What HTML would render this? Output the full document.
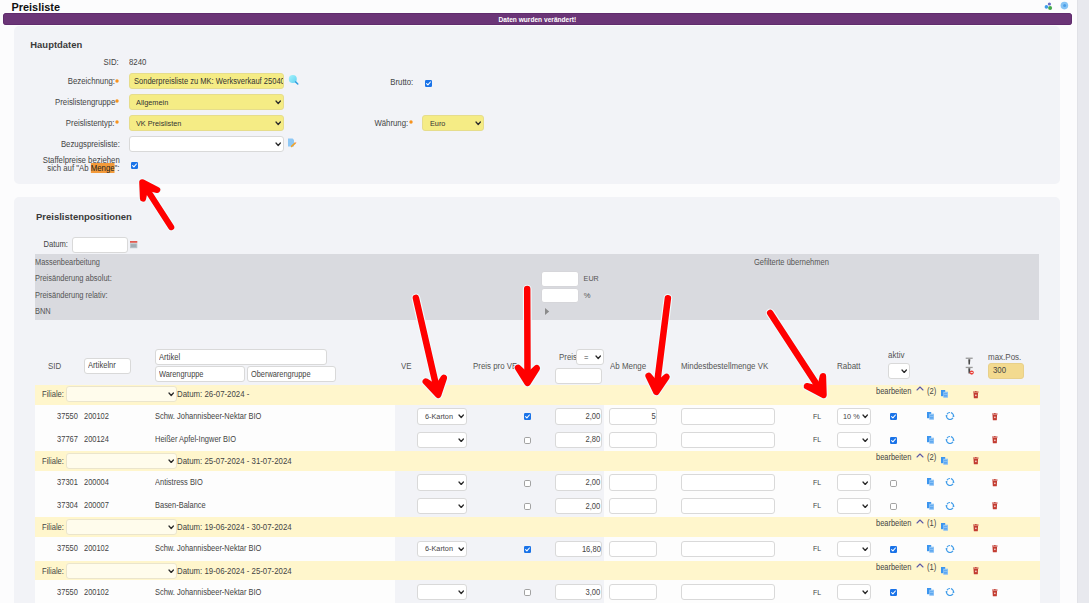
<!DOCTYPE html>
<html><head><meta charset="utf-8"><style>
html,body{margin:0;padding:0;}
body{width:1089px;height:603px;overflow:hidden;position:relative;background:#fcfcfd;font-family:"Liberation Sans", sans-serif;}
</style></head><body>
<div style="position:absolute;left:1076.50px;top:0.00px;width:12.50px;height:603.00px;background:#e8e9ee;border-left:1px solid #e1e2e7;box-sizing:border-box;"></div>
<div style="position:absolute;left:11.50px;top:1.08px;font-size:10.90px;line-height:13.08px;color:#111;font-weight:bold;white-space:nowrap;">Preisliste</div>
<svg style="position:absolute;left:1042px;top:0px" width="12" height="12"><circle cx="7.4" cy="4" r="1.6" fill="#6a6fc8"/><circle cx="4.4" cy="6.9" r="1.8" fill="#3d9be9"/><circle cx="8.1" cy="8.1" r="2" fill="#44a84a"/></svg>
<svg style="position:absolute;left:1059px;top:0px" width="12" height="12"><circle cx="5.4" cy="5.6" r="3.8" fill="#86c4f5"/><circle cx="5.6" cy="5.6" r="1.5" fill="#4d9fe8"/></svg>
<div style="position:absolute;left:3.00px;top:13.20px;width:1068.80px;height:11.40px;background:#6b3577;border-radius:3.5px;box-shadow:inset 0 0 0 0.8px #5e2a6b;"></div>
<div style="position:absolute;left:537.40px;top:16.15px;font-size:6.60px;line-height:7.92px;color:#fff;font-weight:bold;white-space:nowrap;transform:translateX(-50%) scaleX(1.0000);transform-origin:0 0;">Daten wurden verändert!</div>
<div style="position:absolute;left:14.00px;top:26.00px;width:1046.00px;height:158.40px;background:#f2f3f7;border-radius:5px;"></div>
<div style="position:absolute;left:30.30px;top:39.46px;font-size:9.45px;line-height:11.34px;color:#3a3a3a;font-weight:bold;white-space:nowrap;">Hauptdaten</div>
<div style="position:absolute;right:970.00px;top:57.28px;font-size:8.58px;line-height:10.30px;color:#444;font-weight:normal;white-space:nowrap;transform:scaleX(0.9091);transform-origin:100% 0;">SID:</div>
<div style="position:absolute;left:129.00px;top:57.28px;font-size:8.58px;line-height:10.30px;color:#444;font-weight:normal;white-space:nowrap;transform:scaleX(0.9091);transform-origin:0 0;">8240</div>
<svg style="position:absolute;left:115.30px;top:78.70px" width="4" height="4"><circle cx="2" cy="2" r="1.7" fill="#f7931e"/></svg>
<div style="position:absolute;right:974.30px;top:76.28px;font-size:8.58px;line-height:10.30px;color:#444;font-weight:normal;white-space:nowrap;transform:scaleX(0.9091);transform-origin:100% 0;">Bezeichnung:</div>
<div style="position:absolute;left:128.70px;top:73.40px;width:155.70px;height:16.00px;background:#f5ec85;border:1px solid #e6dd8c;border-radius:3px;box-sizing:border-box;"></div>
<div style="position:absolute;left:129.70px;top:73.40px;width:153.70px;height:16.00px;overflow:hidden">
<div style="position:absolute;left:4.30px;top:3.54px;font-size:8.30px;line-height:9.97px;color:#333;font-weight:normal;white-space:nowrap;transform:scaleX(0.9091);transform-origin:0 0;">Sonderpreisliste zu MK: Werksverkauf 25040</div>
</div>
<svg style="position:absolute;left:115.30px;top:99.40px" width="4" height="4"><circle cx="2" cy="2" r="1.7" fill="#f7931e"/></svg>
<div style="position:absolute;right:974.00px;top:97.28px;font-size:8.58px;line-height:10.30px;color:#444;font-weight:normal;white-space:nowrap;transform:scaleX(0.9091);transform-origin:100% 0;">Preislistengruppe</div>
<div style="position:absolute;left:128.70px;top:94.10px;width:155.70px;height:15.90px;background:#f5ec85;border:1px solid #e6dd8c;border-radius:3px;box-sizing:border-box;"></div>
<svg style="position:absolute;left:275.20px;top:100.00px" width="6.40" height="4.50"><polyline points="1,1 3.20,3.50 5.40,1" fill="none" stroke="#2a2a2a" stroke-width="1.25" stroke-linecap="round" stroke-linejoin="round"/></svg>
<div style="position:absolute;left:135.80px;top:97.75px;font-size:8.09px;line-height:9.70px;color:#333;font-weight:normal;white-space:nowrap;transform:scaleX(0.9091);transform-origin:0 0;">Allgemein</div>
<svg style="position:absolute;left:115.30px;top:120.20px" width="4" height="4"><circle cx="2" cy="2" r="1.7" fill="#f7931e"/></svg>
<div style="position:absolute;right:974.30px;top:118.28px;font-size:8.58px;line-height:10.30px;color:#444;font-weight:normal;white-space:nowrap;transform:scaleX(0.9091);transform-origin:100% 0;">Preislistentyp:</div>
<div style="position:absolute;left:128.70px;top:115.30px;width:155.70px;height:15.70px;background:#f5ec85;border:1px solid #e6dd8c;border-radius:3px;box-sizing:border-box;"></div>
<svg style="position:absolute;left:275.20px;top:121.10px" width="6.40" height="4.50"><polyline points="1,1 3.20,3.50 5.40,1" fill="none" stroke="#2a2a2a" stroke-width="1.25" stroke-linecap="round" stroke-linejoin="round"/></svg>
<div style="position:absolute;left:135.80px;top:118.80px;font-size:8.03px;line-height:9.64px;color:#333;font-weight:normal;white-space:nowrap;transform:scaleX(0.9091);transform-origin:0 0;">VK Preislisten</div>
<svg style="position:absolute;left:286px;top:72px" width="14" height="14"><defs><linearGradient id="sg" x1="0" y1="0" x2="1" y2="1"><stop offset="0" stop-color="#a6f3fb"/><stop offset="1" stop-color="#62d2f2"/></linearGradient></defs><circle cx="6.8" cy="7" r="4" fill="url(#sg)"/><line x1="9.6" y1="9.9" x2="11.8" y2="12" stroke="#2f9ee0" stroke-width="1.5" stroke-linecap="round"/></svg>
<svg style="position:absolute;left:286px;top:136px" width="12" height="13"><path d="M2 2.6 L6.6 2.6 L8 4 L8 10.6 L2 10.6 Z" fill="#8ec8f5"/><line x1="5.6" y1="10.4" x2="9.4" y2="6.9" stroke="#f0a22a" stroke-width="1.6" stroke-linecap="round"/><circle cx="9.6" cy="6.6" r="0.7" fill="#f3b1b0"/></svg>
<div style="position:absolute;right:969.60px;top:139.28px;font-size:8.58px;line-height:10.30px;color:#444;font-weight:normal;white-space:nowrap;transform:scaleX(0.9091);transform-origin:100% 0;">Bezugspreisliste:</div>
<div style="position:absolute;left:128.70px;top:136.00px;width:155.70px;height:16.30px;background:#fff;border:1px solid #d9d9d9;border-radius:3px;box-sizing:border-box;"></div>
<svg style="position:absolute;left:275.20px;top:142.10px" width="6.40" height="4.50"><polyline points="1,1 3.20,3.50 5.40,1" fill="none" stroke="#2a2a2a" stroke-width="1.25" stroke-linecap="round" stroke-linejoin="round"/></svg>
<div style="position:absolute;right:969.20px;top:155.28px;font-size:8.58px;line-height:10.30px;color:#444;font-weight:normal;white-space:nowrap;transform:scaleX(0.9091);transform-origin:100% 0;">Staffelpreise beziehen</div>
<div style="position:absolute;right:969.40px;top:163.28px;font-size:8.58px;line-height:10.30px;color:#444;font-weight:normal;white-space:nowrap;transform:scaleX(0.9091);transform-origin:100% 0;">sich auf "Ab <span style="background:#f39a3a;color:#222">Menge</span>":</div>
<svg style="position:absolute;left:130.80px;top:162.00px" width="7" height="7"><rect x="0" y="0" width="7" height="7" rx="1.2" fill="#1a73e8"/><polyline points="1.6,3.6 2.9,4.9 5.4,2" fill="none" stroke="#fff" stroke-width="1.1" stroke-linecap="round" stroke-linejoin="round"/></svg>
<div style="position:absolute;right:675.90px;top:77.28px;font-size:8.58px;line-height:10.30px;color:#444;font-weight:normal;white-space:nowrap;transform:scaleX(0.9091);transform-origin:100% 0;">Brutto:</div>
<svg style="position:absolute;left:424.70px;top:79.60px" width="7" height="7"><rect x="0" y="0" width="7" height="7" rx="1.2" fill="#1a73e8"/><polyline points="1.6,3.6 2.9,4.9 5.4,2" fill="none" stroke="#fff" stroke-width="1.1" stroke-linecap="round" stroke-linejoin="round"/></svg>
<svg style="position:absolute;left:409.20px;top:120.10px" width="4" height="4"><circle cx="2" cy="2" r="1.7" fill="#f7931e"/></svg>
<div style="position:absolute;right:680.60px;top:118.28px;font-size:8.58px;line-height:10.30px;color:#444;font-weight:normal;white-space:nowrap;transform:scaleX(0.9091);transform-origin:100% 0;">Währung:</div>
<div style="position:absolute;left:422.40px;top:115.10px;width:62.00px;height:15.90px;background:#f5ec85;border:1px solid #e6dd8c;border-radius:3px;box-sizing:border-box;"></div>
<svg style="position:absolute;left:475.20px;top:121.00px" width="6.40" height="4.50"><polyline points="1,1 3.20,3.50 5.40,1" fill="none" stroke="#2a2a2a" stroke-width="1.25" stroke-linecap="round" stroke-linejoin="round"/></svg>
<div style="position:absolute;left:429.70px;top:118.80px;font-size:8.03px;line-height:9.64px;color:#333;font-weight:normal;white-space:nowrap;transform:scaleX(0.9091);transform-origin:0 0;">Euro</div>
<div style="position:absolute;left:14.00px;top:197.40px;width:1046.00px;height:502.60px;background:#f2f3f7;border-radius:5px;"></div>
<div style="position:absolute;left:36.00px;top:211.42px;font-size:9.49px;line-height:11.39px;color:#3a3a3a;font-weight:bold;white-space:nowrap;">Preislistenpositionen</div>
<div style="position:absolute;right:1021.00px;top:239.49px;font-size:8.36px;line-height:10.03px;color:#444;font-weight:normal;white-space:nowrap;transform:scaleX(0.9091);transform-origin:100% 0;">Datum:</div>
<div style="position:absolute;left:71.70px;top:236.60px;width:56.20px;height:16.50px;background:#fff;border:1px solid #d9d9d9;border-radius:3px;box-sizing:border-box;"></div>
<svg style="position:absolute;left:130px;top:240.5px" width="8" height="8"><rect x="0" y="0" width="7.3" height="1.8" fill="#e05a4f"/><rect x="0" y="2.2" width="7.3" height="5" fill="#b9c2c8"/><rect x="1" y="3.2" width="5.3" height="3" fill="#a2adb4"/></svg>
<div style="position:absolute;left:35.00px;top:254.00px;width:1004.00px;height:65.80px;background:#d9dadf;"></div>
<div style="position:absolute;left:35.30px;top:257.70px;font-size:8.14px;line-height:9.77px;color:#555;font-weight:normal;white-space:nowrap;transform:scaleX(0.9091);transform-origin:0 0;">Massenbearbeitung</div>
<div style="position:absolute;left:35.30px;top:273.63px;font-size:8.21px;line-height:9.85px;color:#555;font-weight:normal;white-space:nowrap;transform:scaleX(0.9091);transform-origin:0 0;">Preisänderung absolut:</div>
<div style="position:absolute;left:35.30px;top:290.63px;font-size:8.21px;line-height:9.85px;color:#555;font-weight:normal;white-space:nowrap;transform:scaleX(0.9091);transform-origin:0 0;">Preisänderung relativ:</div>
<div style="position:absolute;left:35.30px;top:306.63px;font-size:8.21px;line-height:9.85px;color:#555;font-weight:normal;white-space:nowrap;transform:scaleX(0.9091);transform-origin:0 0;">BNN</div>
<div style="position:absolute;left:753.90px;top:257.55px;font-size:8.29px;line-height:9.95px;color:#555;font-weight:normal;white-space:nowrap;transform:scaleX(0.9091);transform-origin:0 0;">Gefilterte übernehmen</div>
<div style="position:absolute;left:541.20px;top:270.60px;width:38.20px;height:16.00px;background:#fff;border:1px solid #d6d6da;border-radius:3px;box-sizing:border-box;"></div>
<div style="position:absolute;left:541.20px;top:287.80px;width:38.20px;height:15.40px;background:#fff;border:1px solid #d6d6da;border-radius:3px;box-sizing:border-box;"></div>
<div style="position:absolute;left:583.60px;top:274.59px;font-size:7.20px;line-height:8.64px;color:#555;font-weight:normal;white-space:nowrap;">EUR</div>
<div style="position:absolute;left:583.80px;top:291.21px;font-size:7.60px;line-height:9.12px;color:#555;font-weight:normal;white-space:nowrap;">%</div>
<svg style="position:absolute;left:544.8px;top:308px" width="6" height="8"><polygon points="0,0 4.2,3.5 0,7" fill="#8a8a8a"/></svg>
<div style="position:absolute;left:47.50px;top:361.17px;font-size:8.69px;line-height:10.43px;color:#555;font-weight:normal;white-space:nowrap;transform:scaleX(0.9091);transform-origin:0 0;">SID</div>
<div style="position:absolute;left:84.20px;top:357.50px;width:47.30px;height:16.10px;background:#fff;border:1px solid #d9d9d9;border-radius:3px;box-sizing:border-box;"></div>
<div style="position:absolute;left:88.20px;top:360.49px;font-size:8.36px;line-height:10.03px;color:#444;font-weight:normal;white-space:nowrap;transform:scaleX(0.9091);transform-origin:0 0;">Artikelnr</div>
<div style="position:absolute;left:154.70px;top:349.20px;width:171.90px;height:16.20px;background:#fff;border:1px solid #d9d9d9;border-radius:3px;box-sizing:border-box;"></div>
<div style="position:absolute;left:158.70px;top:352.49px;font-size:8.36px;line-height:10.03px;color:#444;font-weight:normal;white-space:nowrap;transform:scaleX(0.9091);transform-origin:0 0;">Artikel</div>
<div style="position:absolute;left:154.70px;top:366.40px;width:89.90px;height:15.80px;background:#fff;border:1px solid #d9d9d9;border-radius:3px;box-sizing:border-box;"></div>
<div style="position:absolute;left:158.70px;top:369.70px;font-size:8.14px;line-height:9.77px;color:#444;font-weight:normal;white-space:nowrap;transform:scaleX(0.9091);transform-origin:0 0;">Warengruppe</div>
<div style="position:absolute;left:247.30px;top:366.40px;width:89.20px;height:15.80px;background:#fff;border:1px solid #d9d9d9;border-radius:3px;box-sizing:border-box;"></div>
<div style="position:absolute;left:251.30px;top:369.70px;font-size:8.14px;line-height:9.77px;color:#444;font-weight:normal;white-space:nowrap;transform:scaleX(0.9091);transform-origin:0 0;">Oberwarengruppe</div>
<div style="position:absolute;left:401.00px;top:361.17px;font-size:8.69px;line-height:10.43px;color:#555;font-weight:normal;white-space:nowrap;transform:scaleX(0.9091);transform-origin:0 0;">VE</div>
<div style="position:absolute;left:472.60px;top:361.17px;font-size:8.69px;line-height:10.43px;color:#555;font-weight:normal;white-space:nowrap;transform:scaleX(0.9091);transform-origin:0 0;">Preis pro VE</div>
<div style="position:absolute;left:558.50px;top:352.17px;font-size:8.69px;line-height:10.43px;color:#555;font-weight:normal;white-space:nowrap;transform:scaleX(0.9091);transform-origin:0 0;">Preis</div>
<div style="position:absolute;left:576.40px;top:349.40px;width:27.30px;height:16.10px;background:#fff;border:1px solid #d9d9d9;border-radius:3px;box-sizing:border-box;"></div>
<svg style="position:absolute;left:594.50px;top:355.40px" width="6.40" height="4.50"><polyline points="1,1 3.20,3.50 5.40,1" fill="none" stroke="#2a2a2a" stroke-width="1.25" stroke-linecap="round" stroke-linejoin="round"/></svg>
<div style="position:absolute;left:584.00px;top:352.49px;font-size:8.36px;line-height:10.03px;color:#444;font-weight:normal;white-space:nowrap;transform:scaleX(0.9091);transform-origin:0 0;">=</div>
<div style="position:absolute;left:554.50px;top:367.50px;width:47.80px;height:16.30px;background:#fff;border:1px solid #d9d9d9;border-radius:3px;box-sizing:border-box;"></div>
<div style="position:absolute;left:609.70px;top:361.13px;font-size:8.73px;line-height:10.48px;color:#555;font-weight:normal;white-space:nowrap;transform:scaleX(0.9091);transform-origin:0 0;">Ab Menge</div>
<div style="position:absolute;left:680.90px;top:361.17px;font-size:8.69px;line-height:10.43px;color:#555;font-weight:normal;white-space:nowrap;transform:scaleX(0.9091);transform-origin:0 0;">Mindestbestellmenge VK</div>
<div style="position:absolute;left:837.30px;top:361.07px;font-size:8.80px;line-height:10.56px;color:#555;font-weight:normal;white-space:nowrap;transform:scaleX(0.9091);transform-origin:0 0;">Rabatt</div>
<div style="position:absolute;left:888.00px;top:350.07px;font-size:8.80px;line-height:10.56px;color:#555;font-weight:normal;white-space:nowrap;transform:scaleX(0.9091);transform-origin:0 0;">aktiv</div>
<div style="position:absolute;left:887.60px;top:362.60px;width:22.20px;height:16.00px;background:#fff;border:1px solid #d9d9d9;border-radius:3px;box-sizing:border-box;"></div>
<svg style="position:absolute;left:900.60px;top:368.55px" width="6.40" height="4.50"><polyline points="1,1 3.20,3.50 5.40,1" fill="none" stroke="#2a2a2a" stroke-width="1.25" stroke-linecap="round" stroke-linejoin="round"/></svg>
<svg style="position:absolute;left:964px;top:356px" width="12" height="20"><rect x="1.7" y="1.6" width="7" height="1.3" fill="#9a9a9a"/><path d="M4.3 3.2 L6.3 3.2 L5.9 8.5 L4.5 8.5 Z" fill="#4a4a4a"/><rect x="1.7" y="10.8" width="7" height="1.3" fill="#9a9a9a"/><path d="M4.3 12.3 L6.3 12.3 L5.9 17.6 L4.5 17.6 Z" fill="#4a4a4a"/><circle cx="7.7" cy="16.6" r="2.1" fill="#e8413b"/><rect x="6.6" y="16.2" width="2.2" height="0.8" fill="#fff"/></svg>
<div style="position:absolute;left:988.30px;top:352.07px;font-size:8.80px;line-height:10.56px;color:#555;font-weight:normal;white-space:nowrap;transform:scaleX(0.9091);transform-origin:0 0;">max.Pos.</div>
<div style="position:absolute;left:988.30px;top:362.80px;width:35.50px;height:15.80px;background:#f3da8f;border:1px solid #e8d08a;border-radius:3px;box-sizing:border-box;"></div>
<div style="position:absolute;left:993.30px;top:365.28px;font-size:8.58px;line-height:10.30px;color:#444;font-weight:normal;white-space:nowrap;transform:scaleX(0.9091);transform-origin:0 0;">300</div>
<div style="position:absolute;left:35.00px;top:384.50px;width:1004.60px;height:20.00px;background:#fff6cc;"></div>
<div style="position:absolute;left:41.70px;top:389.49px;font-size:8.36px;line-height:10.03px;color:#444;font-weight:normal;white-space:nowrap;transform:scaleX(0.9091);transform-origin:0 0;">Filiale:</div>
<div style="position:absolute;left:66.20px;top:386.40px;width:110.50px;height:16.00px;background:#fffcec;border:1px solid #ebe5cc;border-radius:3px;box-sizing:border-box;"></div>
<svg style="position:absolute;left:167.50px;top:392.35px" width="6.40" height="4.50"><polyline points="1,1 3.20,3.50 5.40,1" fill="none" stroke="#2a2a2a" stroke-width="1.25" stroke-linecap="round" stroke-linejoin="round"/></svg>
<div style="position:absolute;left:177.20px;top:389.23px;font-size:8.63px;line-height:10.36px;color:#444;font-weight:normal;white-space:nowrap;transform:scaleX(0.9091);transform-origin:0 0;">Datum: 26-07-2024 -</div>
<div style="position:absolute;left:875.50px;top:386.62px;font-size:8.22px;line-height:9.86px;color:#444;font-weight:normal;white-space:nowrap;transform:scaleX(0.9091);transform-origin:0 0;">bearbeiten</div>
<svg style="position:absolute;left:915.70px;top:386.40px" width="8.00" height="5.00"><polyline points="1,4.00 4.00,1 7.00,4.00" fill="none" stroke="#5a58a8" stroke-width="1.1" stroke-linecap="round" stroke-linejoin="round"/></svg>
<div style="position:absolute;left:927.30px;top:386.49px;font-size:8.36px;line-height:10.03px;color:#444;font-weight:normal;white-space:nowrap;transform:scaleX(0.9091);transform-origin:0 0;">(2)</div>
<svg style="position:absolute;left:940.80px;top:390.30px" width="8" height="8"><rect x="0" y="0" width="4.2" height="6.2" fill="#3b95ef"/><rect x="2.2" y="1.7" width="4.8" height="6" fill="#8fc4f5"/><rect x="3" y="3.4" width="3.2" height="0.7" fill="#4a9cef"/><rect x="3" y="5" width="3.2" height="0.7" fill="#4a9cef"/><rect x="3" y="6.5" width="3.2" height="0.6" fill="#4a9cef"/></svg>
<svg style="position:absolute;left:972.50px;top:390.70px" width="6" height="8"><rect x="0" y="0.4" width="5.6" height="1.1" rx="0.3" fill="#c23b30"/><rect x="2" y="0" width="1.6" height="0.8" fill="#c23b30"/><path d="M0.5 1.8 L5.1 1.8 L4.8 7 Q4.75 7.2 4.5 7.2 L1.1 7.2 Q0.85 7.2 0.8 7 Z" fill="#c23b30"/><rect x="2.1" y="3.6" width="1.5" height="1.5" fill="#f6d3cf"/></svg>
<div style="position:absolute;left:35.00px;top:404.50px;width:360.20px;height:23.50px;background:#fdfdfd;"></div>
<div style="position:absolute;left:395.20px;top:404.50px;width:208.90px;height:23.50px;background:#f2f3f7;"></div>
<div style="position:absolute;left:604.10px;top:404.50px;width:435.50px;height:23.50px;background:#fdfdfd;"></div>
<div style="position:absolute;right:1010.70px;top:411.61px;font-size:8.23px;line-height:9.87px;color:#444;font-weight:normal;white-space:nowrap;transform:scaleX(0.9091);transform-origin:100% 0;">37550</div>
<div style="position:absolute;left:84.30px;top:411.61px;font-size:8.23px;line-height:9.87px;color:#444;font-weight:normal;white-space:nowrap;transform:scaleX(0.9091);transform-origin:0 0;">200102</div>
<div style="position:absolute;left:154.70px;top:411.61px;font-size:8.23px;line-height:9.87px;color:#444;font-weight:normal;white-space:nowrap;transform:scaleX(0.9091);transform-origin:0 0;">Schw. Johannisbeer-Nektar BIO</div>
<div style="position:absolute;left:417.40px;top:408.00px;width:49.80px;height:16.50px;background:#fff;border:1px solid #d9d9d9;border-radius:3px;box-sizing:border-box;"></div>
<svg style="position:absolute;left:458.00px;top:414.20px" width="6.40" height="4.50"><polyline points="1,1 3.20,3.50 5.40,1" fill="none" stroke="#2a2a2a" stroke-width="1.25" stroke-linecap="round" stroke-linejoin="round"/></svg>
<div style="position:absolute;left:424.60px;top:411.80px;font-size:8.03px;line-height:9.64px;color:#444;font-weight:normal;white-space:nowrap;transform:scaleX(0.9091);transform-origin:0 0;">6-Karton</div>
<svg style="position:absolute;left:524.40px;top:413.30px" width="7" height="7"><rect x="0" y="0" width="7" height="7" rx="1.2" fill="#1a73e8"/><polyline points="1.6,3.6 2.9,4.9 5.4,2" fill="none" stroke="#fff" stroke-width="1.1" stroke-linecap="round" stroke-linejoin="round"/></svg>
<div style="position:absolute;left:554.50px;top:408.00px;width:47.80px;height:16.60px;background:#fff;border:1px solid #d9d9d9;border-radius:3px;box-sizing:border-box;"></div>
<div style="position:absolute;right:488.50px;top:411.49px;font-size:8.36px;line-height:10.03px;color:#444;font-weight:normal;white-space:nowrap;transform:scaleX(0.9091);transform-origin:100% 0;">2,00</div>
<div style="position:absolute;left:609.30px;top:408.00px;width:48.10px;height:16.60px;background:#fff;border:1px solid #d9d9d9;border-radius:3px;box-sizing:border-box;"></div>
<div style="position:absolute;right:433.40px;top:411.49px;font-size:8.36px;line-height:10.03px;color:#444;font-weight:normal;white-space:nowrap;transform:scaleX(0.9091);transform-origin:100% 0;">5</div>
<div style="position:absolute;left:681.30px;top:408.00px;width:93.60px;height:16.60px;background:#fff;border:1px solid #d9d9d9;border-radius:3px;box-sizing:border-box;"></div>
<div style="position:absolute;left:813.20px;top:412.11px;font-size:7.70px;line-height:9.24px;color:#444;font-weight:normal;white-space:nowrap;transform:scaleX(0.9091);transform-origin:0 0;">FL</div>
<div style="position:absolute;left:837.30px;top:408.00px;width:33.40px;height:16.50px;background:#fff;border:1px solid #d9d9d9;border-radius:3px;box-sizing:border-box;"></div>
<svg style="position:absolute;left:861.50px;top:414.20px" width="6.40" height="4.50"><polyline points="1,1 3.20,3.50 5.40,1" fill="none" stroke="#2a2a2a" stroke-width="1.25" stroke-linecap="round" stroke-linejoin="round"/></svg>
<div style="position:absolute;left:843.00px;top:411.80px;font-size:8.03px;line-height:9.64px;color:#444;font-weight:normal;white-space:nowrap;transform:scaleX(0.9091);transform-origin:0 0;">10 %</div>
<svg style="position:absolute;left:890.00px;top:413.30px" width="7" height="7"><rect x="0" y="0" width="7" height="7" rx="1.2" fill="#1a73e8"/><polyline points="1.6,3.6 2.9,4.9 5.4,2" fill="none" stroke="#fff" stroke-width="1.1" stroke-linecap="round" stroke-linejoin="round"/></svg>
<svg style="position:absolute;left:927.00px;top:412.00px" width="8" height="8"><rect x="0" y="0" width="4.2" height="6.2" fill="#3b95ef"/><rect x="2.2" y="1.7" width="4.8" height="6" fill="#8fc4f5"/><rect x="3" y="3.4" width="3.2" height="0.7" fill="#4a9cef"/><rect x="3" y="5" width="3.2" height="0.7" fill="#4a9cef"/><rect x="3" y="6.5" width="3.2" height="0.6" fill="#4a9cef"/></svg>
<svg style="position:absolute;left:944.80px;top:411.00px" width="10" height="10"><path d="M5.91 1.60 A3.5 3.5 0 0 1 8.39 5.91 M8.04 6.75 A3.5 3.5 0 0 1 3.25 8.04 M4.09 8.39 A3.5 3.5 0 0 1 1.60 4.09 M1.96 3.25 A3.5 3.5 0 0 1 5.00 1.50" fill="none" stroke="#3d9be9" stroke-width="1.15"/><polygon points="8.50,3.40 9.70,5.40 7.30,5.40" fill="#3d9be9"/><polygon points="1.50,6.60 2.70,4.60 0.30,4.60" fill="#3d9be9"/></svg>
<svg style="position:absolute;left:991.90px;top:412.70px" width="6" height="8"><rect x="0" y="0.4" width="5.6" height="1.1" rx="0.3" fill="#c23b30"/><rect x="2" y="0" width="1.6" height="0.8" fill="#c23b30"/><path d="M0.5 1.8 L5.1 1.8 L4.8 7 Q4.75 7.2 4.5 7.2 L1.1 7.2 Q0.85 7.2 0.8 7 Z" fill="#c23b30"/><rect x="2.1" y="3.6" width="1.5" height="1.5" fill="#f6d3cf"/></svg>
<div style="position:absolute;left:35.00px;top:428.00px;width:360.20px;height:23.00px;background:#fdfdfd;"></div>
<div style="position:absolute;left:395.20px;top:428.00px;width:208.90px;height:23.00px;background:#f2f3f7;"></div>
<div style="position:absolute;left:604.10px;top:428.00px;width:435.50px;height:23.00px;background:#fdfdfd;"></div>
<div style="position:absolute;right:1010.70px;top:434.61px;font-size:8.23px;line-height:9.87px;color:#444;font-weight:normal;white-space:nowrap;transform:scaleX(0.9091);transform-origin:100% 0;">37767</div>
<div style="position:absolute;left:84.30px;top:434.61px;font-size:8.23px;line-height:9.87px;color:#444;font-weight:normal;white-space:nowrap;transform:scaleX(0.9091);transform-origin:0 0;">200124</div>
<div style="position:absolute;left:154.70px;top:434.61px;font-size:8.23px;line-height:9.87px;color:#444;font-weight:normal;white-space:nowrap;transform:scaleX(0.9091);transform-origin:0 0;">Heißer Apfel-Ingwer BIO</div>
<div style="position:absolute;left:417.40px;top:431.50px;width:49.80px;height:16.50px;background:#fff;border:1px solid #d9d9d9;border-radius:3px;box-sizing:border-box;"></div>
<svg style="position:absolute;left:458.00px;top:437.70px" width="6.40" height="4.50"><polyline points="1,1 3.20,3.50 5.40,1" fill="none" stroke="#2a2a2a" stroke-width="1.25" stroke-linecap="round" stroke-linejoin="round"/></svg>
<svg style="position:absolute;left:524.40px;top:436.80px" width="7" height="7"><rect x="0.5" y="0.5" width="6" height="6" rx="1.2" fill="#fff" stroke="#8c8c8c" stroke-width="0.8"/></svg>
<div style="position:absolute;left:554.50px;top:431.50px;width:47.80px;height:16.60px;background:#fff;border:1px solid #d9d9d9;border-radius:3px;box-sizing:border-box;"></div>
<div style="position:absolute;right:488.50px;top:434.49px;font-size:8.36px;line-height:10.03px;color:#444;font-weight:normal;white-space:nowrap;transform:scaleX(0.9091);transform-origin:100% 0;">2,80</div>
<div style="position:absolute;left:609.30px;top:431.50px;width:48.10px;height:16.60px;background:#fff;border:1px solid #d9d9d9;border-radius:3px;box-sizing:border-box;"></div>
<div style="position:absolute;left:681.30px;top:431.50px;width:93.60px;height:16.60px;background:#fff;border:1px solid #d9d9d9;border-radius:3px;box-sizing:border-box;"></div>
<div style="position:absolute;left:813.20px;top:435.11px;font-size:7.70px;line-height:9.24px;color:#444;font-weight:normal;white-space:nowrap;transform:scaleX(0.9091);transform-origin:0 0;">FL</div>
<div style="position:absolute;left:837.30px;top:431.50px;width:33.40px;height:16.50px;background:#fff;border:1px solid #d9d9d9;border-radius:3px;box-sizing:border-box;"></div>
<svg style="position:absolute;left:861.50px;top:437.70px" width="6.40" height="4.50"><polyline points="1,1 3.20,3.50 5.40,1" fill="none" stroke="#2a2a2a" stroke-width="1.25" stroke-linecap="round" stroke-linejoin="round"/></svg>
<svg style="position:absolute;left:890.00px;top:436.80px" width="7" height="7"><rect x="0" y="0" width="7" height="7" rx="1.2" fill="#1a73e8"/><polyline points="1.6,3.6 2.9,4.9 5.4,2" fill="none" stroke="#fff" stroke-width="1.1" stroke-linecap="round" stroke-linejoin="round"/></svg>
<svg style="position:absolute;left:927.00px;top:435.50px" width="8" height="8"><rect x="0" y="0" width="4.2" height="6.2" fill="#3b95ef"/><rect x="2.2" y="1.7" width="4.8" height="6" fill="#8fc4f5"/><rect x="3" y="3.4" width="3.2" height="0.7" fill="#4a9cef"/><rect x="3" y="5" width="3.2" height="0.7" fill="#4a9cef"/><rect x="3" y="6.5" width="3.2" height="0.6" fill="#4a9cef"/></svg>
<svg style="position:absolute;left:944.80px;top:434.50px" width="10" height="10"><path d="M5.91 1.60 A3.5 3.5 0 0 1 8.39 5.91 M8.04 6.75 A3.5 3.5 0 0 1 3.25 8.04 M4.09 8.39 A3.5 3.5 0 0 1 1.60 4.09 M1.96 3.25 A3.5 3.5 0 0 1 5.00 1.50" fill="none" stroke="#3d9be9" stroke-width="1.15"/><polygon points="8.50,3.40 9.70,5.40 7.30,5.40" fill="#3d9be9"/><polygon points="1.50,6.60 2.70,4.60 0.30,4.60" fill="#3d9be9"/></svg>
<svg style="position:absolute;left:991.90px;top:436.20px" width="6" height="8"><rect x="0" y="0.4" width="5.6" height="1.1" rx="0.3" fill="#c23b30"/><rect x="2" y="0" width="1.6" height="0.8" fill="#c23b30"/><path d="M0.5 1.8 L5.1 1.8 L4.8 7 Q4.75 7.2 4.5 7.2 L1.1 7.2 Q0.85 7.2 0.8 7 Z" fill="#c23b30"/><rect x="2.1" y="3.6" width="1.5" height="1.5" fill="#f6d3cf"/></svg>
<div style="position:absolute;left:35.00px;top:451.00px;width:1004.60px;height:19.80px;background:#fff6cc;"></div>
<div style="position:absolute;left:41.70px;top:456.49px;font-size:8.36px;line-height:10.03px;color:#444;font-weight:normal;white-space:nowrap;transform:scaleX(0.9091);transform-origin:0 0;">Filiale:</div>
<div style="position:absolute;left:66.20px;top:452.90px;width:110.50px;height:16.00px;background:#fffcec;border:1px solid #ebe5cc;border-radius:3px;box-sizing:border-box;"></div>
<svg style="position:absolute;left:167.50px;top:458.85px" width="6.40" height="4.50"><polyline points="1,1 3.20,3.50 5.40,1" fill="none" stroke="#2a2a2a" stroke-width="1.25" stroke-linecap="round" stroke-linejoin="round"/></svg>
<div style="position:absolute;left:177.20px;top:456.23px;font-size:8.63px;line-height:10.36px;color:#444;font-weight:normal;white-space:nowrap;transform:scaleX(0.9091);transform-origin:0 0;">Datum: 25-07-2024 - 31-07-2024</div>
<div style="position:absolute;left:875.50px;top:452.62px;font-size:8.22px;line-height:9.86px;color:#444;font-weight:normal;white-space:nowrap;transform:scaleX(0.9091);transform-origin:0 0;">bearbeiten</div>
<svg style="position:absolute;left:915.70px;top:452.90px" width="8.00" height="5.00"><polyline points="1,4.00 4.00,1 7.00,4.00" fill="none" stroke="#5a58a8" stroke-width="1.1" stroke-linecap="round" stroke-linejoin="round"/></svg>
<div style="position:absolute;left:927.30px;top:452.49px;font-size:8.36px;line-height:10.03px;color:#444;font-weight:normal;white-space:nowrap;transform:scaleX(0.9091);transform-origin:0 0;">(2)</div>
<svg style="position:absolute;left:940.80px;top:456.80px" width="8" height="8"><rect x="0" y="0" width="4.2" height="6.2" fill="#3b95ef"/><rect x="2.2" y="1.7" width="4.8" height="6" fill="#8fc4f5"/><rect x="3" y="3.4" width="3.2" height="0.7" fill="#4a9cef"/><rect x="3" y="5" width="3.2" height="0.7" fill="#4a9cef"/><rect x="3" y="6.5" width="3.2" height="0.6" fill="#4a9cef"/></svg>
<svg style="position:absolute;left:972.50px;top:457.20px" width="6" height="8"><rect x="0" y="0.4" width="5.6" height="1.1" rx="0.3" fill="#c23b30"/><rect x="2" y="0" width="1.6" height="0.8" fill="#c23b30"/><path d="M0.5 1.8 L5.1 1.8 L4.8 7 Q4.75 7.2 4.5 7.2 L1.1 7.2 Q0.85 7.2 0.8 7 Z" fill="#c23b30"/><rect x="2.1" y="3.6" width="1.5" height="1.5" fill="#f6d3cf"/></svg>
<div style="position:absolute;left:35.00px;top:470.80px;width:360.20px;height:23.30px;background:#fdfdfd;"></div>
<div style="position:absolute;left:395.20px;top:470.80px;width:208.90px;height:23.30px;background:#f2f3f7;"></div>
<div style="position:absolute;left:604.10px;top:470.80px;width:435.50px;height:23.30px;background:#fdfdfd;"></div>
<div style="position:absolute;right:1010.70px;top:477.61px;font-size:8.23px;line-height:9.87px;color:#444;font-weight:normal;white-space:nowrap;transform:scaleX(0.9091);transform-origin:100% 0;">37301</div>
<div style="position:absolute;left:84.30px;top:477.61px;font-size:8.23px;line-height:9.87px;color:#444;font-weight:normal;white-space:nowrap;transform:scaleX(0.9091);transform-origin:0 0;">200004</div>
<div style="position:absolute;left:154.70px;top:477.61px;font-size:8.23px;line-height:9.87px;color:#444;font-weight:normal;white-space:nowrap;transform:scaleX(0.9091);transform-origin:0 0;">Antistress BIO</div>
<div style="position:absolute;left:417.40px;top:474.30px;width:49.80px;height:16.50px;background:#fff;border:1px solid #d9d9d9;border-radius:3px;box-sizing:border-box;"></div>
<svg style="position:absolute;left:458.00px;top:480.50px" width="6.40" height="4.50"><polyline points="1,1 3.20,3.50 5.40,1" fill="none" stroke="#2a2a2a" stroke-width="1.25" stroke-linecap="round" stroke-linejoin="round"/></svg>
<svg style="position:absolute;left:524.40px;top:479.60px" width="7" height="7"><rect x="0.5" y="0.5" width="6" height="6" rx="1.2" fill="#fff" stroke="#8c8c8c" stroke-width="0.8"/></svg>
<div style="position:absolute;left:554.50px;top:474.30px;width:47.80px;height:16.60px;background:#fff;border:1px solid #d9d9d9;border-radius:3px;box-sizing:border-box;"></div>
<div style="position:absolute;right:488.50px;top:477.49px;font-size:8.36px;line-height:10.03px;color:#444;font-weight:normal;white-space:nowrap;transform:scaleX(0.9091);transform-origin:100% 0;">2,00</div>
<div style="position:absolute;left:609.30px;top:474.30px;width:48.10px;height:16.60px;background:#fff;border:1px solid #d9d9d9;border-radius:3px;box-sizing:border-box;"></div>
<div style="position:absolute;left:681.30px;top:474.30px;width:93.60px;height:16.60px;background:#fff;border:1px solid #d9d9d9;border-radius:3px;box-sizing:border-box;"></div>
<div style="position:absolute;left:813.20px;top:478.11px;font-size:7.70px;line-height:9.24px;color:#444;font-weight:normal;white-space:nowrap;transform:scaleX(0.9091);transform-origin:0 0;">FL</div>
<div style="position:absolute;left:837.30px;top:474.30px;width:33.40px;height:16.50px;background:#fff;border:1px solid #d9d9d9;border-radius:3px;box-sizing:border-box;"></div>
<svg style="position:absolute;left:861.50px;top:480.50px" width="6.40" height="4.50"><polyline points="1,1 3.20,3.50 5.40,1" fill="none" stroke="#2a2a2a" stroke-width="1.25" stroke-linecap="round" stroke-linejoin="round"/></svg>
<svg style="position:absolute;left:890.00px;top:479.60px" width="7" height="7"><rect x="0.5" y="0.5" width="6" height="6" rx="1.2" fill="#fff" stroke="#8c8c8c" stroke-width="0.8"/></svg>
<svg style="position:absolute;left:927.00px;top:478.30px" width="8" height="8"><rect x="0" y="0" width="4.2" height="6.2" fill="#3b95ef"/><rect x="2.2" y="1.7" width="4.8" height="6" fill="#8fc4f5"/><rect x="3" y="3.4" width="3.2" height="0.7" fill="#4a9cef"/><rect x="3" y="5" width="3.2" height="0.7" fill="#4a9cef"/><rect x="3" y="6.5" width="3.2" height="0.6" fill="#4a9cef"/></svg>
<svg style="position:absolute;left:944.80px;top:477.30px" width="10" height="10"><path d="M5.91 1.60 A3.5 3.5 0 0 1 8.39 5.91 M8.04 6.75 A3.5 3.5 0 0 1 3.25 8.04 M4.09 8.39 A3.5 3.5 0 0 1 1.60 4.09 M1.96 3.25 A3.5 3.5 0 0 1 5.00 1.50" fill="none" stroke="#3d9be9" stroke-width="1.15"/><polygon points="8.50,3.40 9.70,5.40 7.30,5.40" fill="#3d9be9"/><polygon points="1.50,6.60 2.70,4.60 0.30,4.60" fill="#3d9be9"/></svg>
<svg style="position:absolute;left:991.90px;top:479.00px" width="6" height="8"><rect x="0" y="0.4" width="5.6" height="1.1" rx="0.3" fill="#c23b30"/><rect x="2" y="0" width="1.6" height="0.8" fill="#c23b30"/><path d="M0.5 1.8 L5.1 1.8 L4.8 7 Q4.75 7.2 4.5 7.2 L1.1 7.2 Q0.85 7.2 0.8 7 Z" fill="#c23b30"/><rect x="2.1" y="3.6" width="1.5" height="1.5" fill="#f6d3cf"/></svg>
<div style="position:absolute;left:35.00px;top:494.10px;width:360.20px;height:23.20px;background:#fdfdfd;"></div>
<div style="position:absolute;left:395.20px;top:494.10px;width:208.90px;height:23.20px;background:#f2f3f7;"></div>
<div style="position:absolute;left:604.10px;top:494.10px;width:435.50px;height:23.20px;background:#fdfdfd;"></div>
<div style="position:absolute;right:1010.70px;top:500.61px;font-size:8.23px;line-height:9.87px;color:#444;font-weight:normal;white-space:nowrap;transform:scaleX(0.9091);transform-origin:100% 0;">37304</div>
<div style="position:absolute;left:84.30px;top:500.61px;font-size:8.23px;line-height:9.87px;color:#444;font-weight:normal;white-space:nowrap;transform:scaleX(0.9091);transform-origin:0 0;">200007</div>
<div style="position:absolute;left:154.70px;top:500.61px;font-size:8.23px;line-height:9.87px;color:#444;font-weight:normal;white-space:nowrap;transform:scaleX(0.9091);transform-origin:0 0;">Basen-Balance</div>
<div style="position:absolute;left:417.40px;top:497.60px;width:49.80px;height:16.50px;background:#fff;border:1px solid #d9d9d9;border-radius:3px;box-sizing:border-box;"></div>
<svg style="position:absolute;left:458.00px;top:503.80px" width="6.40" height="4.50"><polyline points="1,1 3.20,3.50 5.40,1" fill="none" stroke="#2a2a2a" stroke-width="1.25" stroke-linecap="round" stroke-linejoin="round"/></svg>
<svg style="position:absolute;left:524.40px;top:502.90px" width="7" height="7"><rect x="0.5" y="0.5" width="6" height="6" rx="1.2" fill="#fff" stroke="#8c8c8c" stroke-width="0.8"/></svg>
<div style="position:absolute;left:554.50px;top:497.60px;width:47.80px;height:16.60px;background:#fff;border:1px solid #d9d9d9;border-radius:3px;box-sizing:border-box;"></div>
<div style="position:absolute;right:488.50px;top:501.49px;font-size:8.36px;line-height:10.03px;color:#444;font-weight:normal;white-space:nowrap;transform:scaleX(0.9091);transform-origin:100% 0;">2,00</div>
<div style="position:absolute;left:609.30px;top:497.60px;width:48.10px;height:16.60px;background:#fff;border:1px solid #d9d9d9;border-radius:3px;box-sizing:border-box;"></div>
<div style="position:absolute;left:681.30px;top:497.60px;width:93.60px;height:16.60px;background:#fff;border:1px solid #d9d9d9;border-radius:3px;box-sizing:border-box;"></div>
<div style="position:absolute;left:813.20px;top:501.11px;font-size:7.70px;line-height:9.24px;color:#444;font-weight:normal;white-space:nowrap;transform:scaleX(0.9091);transform-origin:0 0;">FL</div>
<div style="position:absolute;left:837.30px;top:497.60px;width:33.40px;height:16.50px;background:#fff;border:1px solid #d9d9d9;border-radius:3px;box-sizing:border-box;"></div>
<svg style="position:absolute;left:861.50px;top:503.80px" width="6.40" height="4.50"><polyline points="1,1 3.20,3.50 5.40,1" fill="none" stroke="#2a2a2a" stroke-width="1.25" stroke-linecap="round" stroke-linejoin="round"/></svg>
<svg style="position:absolute;left:890.00px;top:502.90px" width="7" height="7"><rect x="0.5" y="0.5" width="6" height="6" rx="1.2" fill="#fff" stroke="#8c8c8c" stroke-width="0.8"/></svg>
<svg style="position:absolute;left:927.00px;top:501.60px" width="8" height="8"><rect x="0" y="0" width="4.2" height="6.2" fill="#3b95ef"/><rect x="2.2" y="1.7" width="4.8" height="6" fill="#8fc4f5"/><rect x="3" y="3.4" width="3.2" height="0.7" fill="#4a9cef"/><rect x="3" y="5" width="3.2" height="0.7" fill="#4a9cef"/><rect x="3" y="6.5" width="3.2" height="0.6" fill="#4a9cef"/></svg>
<svg style="position:absolute;left:944.80px;top:500.60px" width="10" height="10"><path d="M5.91 1.60 A3.5 3.5 0 0 1 8.39 5.91 M8.04 6.75 A3.5 3.5 0 0 1 3.25 8.04 M4.09 8.39 A3.5 3.5 0 0 1 1.60 4.09 M1.96 3.25 A3.5 3.5 0 0 1 5.00 1.50" fill="none" stroke="#3d9be9" stroke-width="1.15"/><polygon points="8.50,3.40 9.70,5.40 7.30,5.40" fill="#3d9be9"/><polygon points="1.50,6.60 2.70,4.60 0.30,4.60" fill="#3d9be9"/></svg>
<svg style="position:absolute;left:991.90px;top:502.30px" width="6" height="8"><rect x="0" y="0.4" width="5.6" height="1.1" rx="0.3" fill="#c23b30"/><rect x="2" y="0" width="1.6" height="0.8" fill="#c23b30"/><path d="M0.5 1.8 L5.1 1.8 L4.8 7 Q4.75 7.2 4.5 7.2 L1.1 7.2 Q0.85 7.2 0.8 7 Z" fill="#c23b30"/><rect x="2.1" y="3.6" width="1.5" height="1.5" fill="#f6d3cf"/></svg>
<div style="position:absolute;left:35.00px;top:517.30px;width:1004.60px;height:19.70px;background:#fff6cc;"></div>
<div style="position:absolute;left:41.70px;top:522.49px;font-size:8.36px;line-height:10.03px;color:#444;font-weight:normal;white-space:nowrap;transform:scaleX(0.9091);transform-origin:0 0;">Filiale:</div>
<div style="position:absolute;left:66.20px;top:519.20px;width:110.50px;height:16.00px;background:#fffcec;border:1px solid #ebe5cc;border-radius:3px;box-sizing:border-box;"></div>
<svg style="position:absolute;left:167.50px;top:525.15px" width="6.40" height="4.50"><polyline points="1,1 3.20,3.50 5.40,1" fill="none" stroke="#2a2a2a" stroke-width="1.25" stroke-linecap="round" stroke-linejoin="round"/></svg>
<div style="position:absolute;left:177.20px;top:522.23px;font-size:8.63px;line-height:10.36px;color:#444;font-weight:normal;white-space:nowrap;transform:scaleX(0.9091);transform-origin:0 0;">Datum: 19-06-2024 - 30-07-2024</div>
<div style="position:absolute;left:875.50px;top:518.62px;font-size:8.22px;line-height:9.86px;color:#444;font-weight:normal;white-space:nowrap;transform:scaleX(0.9091);transform-origin:0 0;">bearbeiten</div>
<svg style="position:absolute;left:915.70px;top:519.20px" width="8.00" height="5.00"><polyline points="1,4.00 4.00,1 7.00,4.00" fill="none" stroke="#5a58a8" stroke-width="1.1" stroke-linecap="round" stroke-linejoin="round"/></svg>
<div style="position:absolute;left:927.30px;top:518.49px;font-size:8.36px;line-height:10.03px;color:#444;font-weight:normal;white-space:nowrap;transform:scaleX(0.9091);transform-origin:0 0;">(1)</div>
<svg style="position:absolute;left:940.80px;top:523.10px" width="8" height="8"><rect x="0" y="0" width="4.2" height="6.2" fill="#3b95ef"/><rect x="2.2" y="1.7" width="4.8" height="6" fill="#8fc4f5"/><rect x="3" y="3.4" width="3.2" height="0.7" fill="#4a9cef"/><rect x="3" y="5" width="3.2" height="0.7" fill="#4a9cef"/><rect x="3" y="6.5" width="3.2" height="0.6" fill="#4a9cef"/></svg>
<svg style="position:absolute;left:972.50px;top:523.50px" width="6" height="8"><rect x="0" y="0.4" width="5.6" height="1.1" rx="0.3" fill="#c23b30"/><rect x="2" y="0" width="1.6" height="0.8" fill="#c23b30"/><path d="M0.5 1.8 L5.1 1.8 L4.8 7 Q4.75 7.2 4.5 7.2 L1.1 7.2 Q0.85 7.2 0.8 7 Z" fill="#c23b30"/><rect x="2.1" y="3.6" width="1.5" height="1.5" fill="#f6d3cf"/></svg>
<div style="position:absolute;left:35.00px;top:537.00px;width:360.20px;height:23.70px;background:#fdfdfd;"></div>
<div style="position:absolute;left:395.20px;top:537.00px;width:208.90px;height:23.70px;background:#f2f3f7;"></div>
<div style="position:absolute;left:604.10px;top:537.00px;width:435.50px;height:23.70px;background:#fdfdfd;"></div>
<div style="position:absolute;right:1010.70px;top:543.61px;font-size:8.23px;line-height:9.87px;color:#444;font-weight:normal;white-space:nowrap;transform:scaleX(0.9091);transform-origin:100% 0;">37550</div>
<div style="position:absolute;left:84.30px;top:543.61px;font-size:8.23px;line-height:9.87px;color:#444;font-weight:normal;white-space:nowrap;transform:scaleX(0.9091);transform-origin:0 0;">200102</div>
<div style="position:absolute;left:154.70px;top:543.61px;font-size:8.23px;line-height:9.87px;color:#444;font-weight:normal;white-space:nowrap;transform:scaleX(0.9091);transform-origin:0 0;">Schw. Johannisbeer-Nektar BIO</div>
<div style="position:absolute;left:417.40px;top:540.50px;width:49.80px;height:16.50px;background:#fff;border:1px solid #d9d9d9;border-radius:3px;box-sizing:border-box;"></div>
<svg style="position:absolute;left:458.00px;top:546.70px" width="6.40" height="4.50"><polyline points="1,1 3.20,3.50 5.40,1" fill="none" stroke="#2a2a2a" stroke-width="1.25" stroke-linecap="round" stroke-linejoin="round"/></svg>
<div style="position:absolute;left:424.60px;top:543.80px;font-size:8.03px;line-height:9.64px;color:#444;font-weight:normal;white-space:nowrap;transform:scaleX(0.9091);transform-origin:0 0;">6-Karton</div>
<svg style="position:absolute;left:524.40px;top:545.80px" width="7" height="7"><rect x="0" y="0" width="7" height="7" rx="1.2" fill="#1a73e8"/><polyline points="1.6,3.6 2.9,4.9 5.4,2" fill="none" stroke="#fff" stroke-width="1.1" stroke-linecap="round" stroke-linejoin="round"/></svg>
<div style="position:absolute;left:554.50px;top:540.50px;width:47.80px;height:16.60px;background:#fff;border:1px solid #d9d9d9;border-radius:3px;box-sizing:border-box;"></div>
<div style="position:absolute;right:488.50px;top:544.49px;font-size:8.36px;line-height:10.03px;color:#444;font-weight:normal;white-space:nowrap;transform:scaleX(0.9091);transform-origin:100% 0;">16,80</div>
<div style="position:absolute;left:609.30px;top:540.50px;width:48.10px;height:16.60px;background:#fff;border:1px solid #d9d9d9;border-radius:3px;box-sizing:border-box;"></div>
<div style="position:absolute;left:681.30px;top:540.50px;width:93.60px;height:16.60px;background:#fff;border:1px solid #d9d9d9;border-radius:3px;box-sizing:border-box;"></div>
<div style="position:absolute;left:813.20px;top:544.11px;font-size:7.70px;line-height:9.24px;color:#444;font-weight:normal;white-space:nowrap;transform:scaleX(0.9091);transform-origin:0 0;">FL</div>
<div style="position:absolute;left:837.30px;top:540.50px;width:33.40px;height:16.50px;background:#fff;border:1px solid #d9d9d9;border-radius:3px;box-sizing:border-box;"></div>
<svg style="position:absolute;left:861.50px;top:546.70px" width="6.40" height="4.50"><polyline points="1,1 3.20,3.50 5.40,1" fill="none" stroke="#2a2a2a" stroke-width="1.25" stroke-linecap="round" stroke-linejoin="round"/></svg>
<svg style="position:absolute;left:890.00px;top:545.80px" width="7" height="7"><rect x="0" y="0" width="7" height="7" rx="1.2" fill="#1a73e8"/><polyline points="1.6,3.6 2.9,4.9 5.4,2" fill="none" stroke="#fff" stroke-width="1.1" stroke-linecap="round" stroke-linejoin="round"/></svg>
<svg style="position:absolute;left:927.00px;top:544.50px" width="8" height="8"><rect x="0" y="0" width="4.2" height="6.2" fill="#3b95ef"/><rect x="2.2" y="1.7" width="4.8" height="6" fill="#8fc4f5"/><rect x="3" y="3.4" width="3.2" height="0.7" fill="#4a9cef"/><rect x="3" y="5" width="3.2" height="0.7" fill="#4a9cef"/><rect x="3" y="6.5" width="3.2" height="0.6" fill="#4a9cef"/></svg>
<svg style="position:absolute;left:944.80px;top:543.50px" width="10" height="10"><path d="M5.91 1.60 A3.5 3.5 0 0 1 8.39 5.91 M8.04 6.75 A3.5 3.5 0 0 1 3.25 8.04 M4.09 8.39 A3.5 3.5 0 0 1 1.60 4.09 M1.96 3.25 A3.5 3.5 0 0 1 5.00 1.50" fill="none" stroke="#3d9be9" stroke-width="1.15"/><polygon points="8.50,3.40 9.70,5.40 7.30,5.40" fill="#3d9be9"/><polygon points="1.50,6.60 2.70,4.60 0.30,4.60" fill="#3d9be9"/></svg>
<svg style="position:absolute;left:991.90px;top:545.20px" width="6" height="8"><rect x="0" y="0.4" width="5.6" height="1.1" rx="0.3" fill="#c23b30"/><rect x="2" y="0" width="1.6" height="0.8" fill="#c23b30"/><path d="M0.5 1.8 L5.1 1.8 L4.8 7 Q4.75 7.2 4.5 7.2 L1.1 7.2 Q0.85 7.2 0.8 7 Z" fill="#c23b30"/><rect x="2.1" y="3.6" width="1.5" height="1.5" fill="#f6d3cf"/></svg>
<div style="position:absolute;left:35.00px;top:560.70px;width:1004.60px;height:19.70px;background:#fff6cc;"></div>
<div style="position:absolute;left:41.70px;top:566.49px;font-size:8.36px;line-height:10.03px;color:#444;font-weight:normal;white-space:nowrap;transform:scaleX(0.9091);transform-origin:0 0;">Filiale:</div>
<div style="position:absolute;left:66.20px;top:562.60px;width:110.50px;height:16.00px;background:#fffcec;border:1px solid #ebe5cc;border-radius:3px;box-sizing:border-box;"></div>
<svg style="position:absolute;left:167.50px;top:568.55px" width="6.40" height="4.50"><polyline points="1,1 3.20,3.50 5.40,1" fill="none" stroke="#2a2a2a" stroke-width="1.25" stroke-linecap="round" stroke-linejoin="round"/></svg>
<div style="position:absolute;left:177.20px;top:566.23px;font-size:8.63px;line-height:10.36px;color:#444;font-weight:normal;white-space:nowrap;transform:scaleX(0.9091);transform-origin:0 0;">Datum: 19-06-2024 - 25-07-2024</div>
<div style="position:absolute;left:875.50px;top:562.62px;font-size:8.22px;line-height:9.86px;color:#444;font-weight:normal;white-space:nowrap;transform:scaleX(0.9091);transform-origin:0 0;">bearbeiten</div>
<svg style="position:absolute;left:915.70px;top:562.60px" width="8.00" height="5.00"><polyline points="1,4.00 4.00,1 7.00,4.00" fill="none" stroke="#5a58a8" stroke-width="1.1" stroke-linecap="round" stroke-linejoin="round"/></svg>
<div style="position:absolute;left:927.30px;top:562.49px;font-size:8.36px;line-height:10.03px;color:#444;font-weight:normal;white-space:nowrap;transform:scaleX(0.9091);transform-origin:0 0;">(1)</div>
<svg style="position:absolute;left:940.80px;top:566.50px" width="8" height="8"><rect x="0" y="0" width="4.2" height="6.2" fill="#3b95ef"/><rect x="2.2" y="1.7" width="4.8" height="6" fill="#8fc4f5"/><rect x="3" y="3.4" width="3.2" height="0.7" fill="#4a9cef"/><rect x="3" y="5" width="3.2" height="0.7" fill="#4a9cef"/><rect x="3" y="6.5" width="3.2" height="0.6" fill="#4a9cef"/></svg>
<svg style="position:absolute;left:972.50px;top:566.90px" width="6" height="8"><rect x="0" y="0.4" width="5.6" height="1.1" rx="0.3" fill="#c23b30"/><rect x="2" y="0" width="1.6" height="0.8" fill="#c23b30"/><path d="M0.5 1.8 L5.1 1.8 L4.8 7 Q4.75 7.2 4.5 7.2 L1.1 7.2 Q0.85 7.2 0.8 7 Z" fill="#c23b30"/><rect x="2.1" y="3.6" width="1.5" height="1.5" fill="#f6d3cf"/></svg>
<div style="position:absolute;left:35.00px;top:580.40px;width:360.20px;height:23.30px;background:#fdfdfd;"></div>
<div style="position:absolute;left:395.20px;top:580.40px;width:208.90px;height:23.30px;background:#f2f3f7;"></div>
<div style="position:absolute;left:604.10px;top:580.40px;width:435.50px;height:23.30px;background:#fdfdfd;"></div>
<div style="position:absolute;right:1010.70px;top:587.61px;font-size:8.23px;line-height:9.87px;color:#444;font-weight:normal;white-space:nowrap;transform:scaleX(0.9091);transform-origin:100% 0;">37550</div>
<div style="position:absolute;left:84.30px;top:587.61px;font-size:8.23px;line-height:9.87px;color:#444;font-weight:normal;white-space:nowrap;transform:scaleX(0.9091);transform-origin:0 0;">200102</div>
<div style="position:absolute;left:154.70px;top:587.61px;font-size:8.23px;line-height:9.87px;color:#444;font-weight:normal;white-space:nowrap;transform:scaleX(0.9091);transform-origin:0 0;">Schw. Johannisbeer-Nektar BIO</div>
<div style="position:absolute;left:417.40px;top:583.90px;width:49.80px;height:16.50px;background:#fff;border:1px solid #d9d9d9;border-radius:3px;box-sizing:border-box;"></div>
<svg style="position:absolute;left:458.00px;top:590.10px" width="6.40" height="4.50"><polyline points="1,1 3.20,3.50 5.40,1" fill="none" stroke="#2a2a2a" stroke-width="1.25" stroke-linecap="round" stroke-linejoin="round"/></svg>
<svg style="position:absolute;left:524.40px;top:589.20px" width="7" height="7"><rect x="0.5" y="0.5" width="6" height="6" rx="1.2" fill="#fff" stroke="#8c8c8c" stroke-width="0.8"/></svg>
<div style="position:absolute;left:554.50px;top:583.90px;width:47.80px;height:16.60px;background:#fff;border:1px solid #d9d9d9;border-radius:3px;box-sizing:border-box;"></div>
<div style="position:absolute;right:488.50px;top:587.49px;font-size:8.36px;line-height:10.03px;color:#444;font-weight:normal;white-space:nowrap;transform:scaleX(0.9091);transform-origin:100% 0;">3,00</div>
<div style="position:absolute;left:609.30px;top:583.90px;width:48.10px;height:16.60px;background:#fff;border:1px solid #d9d9d9;border-radius:3px;box-sizing:border-box;"></div>
<div style="position:absolute;left:681.30px;top:583.90px;width:93.60px;height:16.60px;background:#fff;border:1px solid #d9d9d9;border-radius:3px;box-sizing:border-box;"></div>
<div style="position:absolute;left:813.20px;top:588.11px;font-size:7.70px;line-height:9.24px;color:#444;font-weight:normal;white-space:nowrap;transform:scaleX(0.9091);transform-origin:0 0;">FL</div>
<div style="position:absolute;left:837.30px;top:583.90px;width:33.40px;height:16.50px;background:#fff;border:1px solid #d9d9d9;border-radius:3px;box-sizing:border-box;"></div>
<svg style="position:absolute;left:861.50px;top:590.10px" width="6.40" height="4.50"><polyline points="1,1 3.20,3.50 5.40,1" fill="none" stroke="#2a2a2a" stroke-width="1.25" stroke-linecap="round" stroke-linejoin="round"/></svg>
<svg style="position:absolute;left:890.00px;top:589.20px" width="7" height="7"><rect x="0" y="0" width="7" height="7" rx="1.2" fill="#1a73e8"/><polyline points="1.6,3.6 2.9,4.9 5.4,2" fill="none" stroke="#fff" stroke-width="1.1" stroke-linecap="round" stroke-linejoin="round"/></svg>
<svg style="position:absolute;left:927.00px;top:587.90px" width="8" height="8"><rect x="0" y="0" width="4.2" height="6.2" fill="#3b95ef"/><rect x="2.2" y="1.7" width="4.8" height="6" fill="#8fc4f5"/><rect x="3" y="3.4" width="3.2" height="0.7" fill="#4a9cef"/><rect x="3" y="5" width="3.2" height="0.7" fill="#4a9cef"/><rect x="3" y="6.5" width="3.2" height="0.6" fill="#4a9cef"/></svg>
<svg style="position:absolute;left:944.80px;top:586.90px" width="10" height="10"><path d="M5.91 1.60 A3.5 3.5 0 0 1 8.39 5.91 M8.04 6.75 A3.5 3.5 0 0 1 3.25 8.04 M4.09 8.39 A3.5 3.5 0 0 1 1.60 4.09 M1.96 3.25 A3.5 3.5 0 0 1 5.00 1.50" fill="none" stroke="#3d9be9" stroke-width="1.15"/><polygon points="8.50,3.40 9.70,5.40 7.30,5.40" fill="#3d9be9"/><polygon points="1.50,6.60 2.70,4.60 0.30,4.60" fill="#3d9be9"/></svg>
<svg style="position:absolute;left:991.90px;top:588.60px" width="6" height="8"><rect x="0" y="0.4" width="5.6" height="1.1" rx="0.3" fill="#c23b30"/><rect x="2" y="0" width="1.6" height="0.8" fill="#c23b30"/><path d="M0.5 1.8 L5.1 1.8 L4.8 7 Q4.75 7.2 4.5 7.2 L1.1 7.2 Q0.85 7.2 0.8 7 Z" fill="#c23b30"/><rect x="2.1" y="3.6" width="1.5" height="1.5" fill="#f6d3cf"/></svg>
<svg style="position:absolute;left:0;top:0" width="1089" height="603"><line x1="171.2" y1="227.1" x2="145.42" y2="187.06" stroke="#f0fdff" stroke-width="8.4" stroke-linecap="round"/><polygon points="142.3,182.3 157.2,189.9 145.42,187.06 143,198.5" fill="#f0fdff" stroke="#f0fdff" stroke-width="8.4" stroke-linejoin="round"/><line x1="171.2" y1="227.1" x2="145.42" y2="187.06" stroke="#ff0000" stroke-width="6.2" stroke-linecap="round"/><polygon points="142.3,182.3 157.2,189.9 145.42,187.06 143,198.5" fill="#ff0000" stroke="#ff0000" stroke-width="6.2" stroke-linejoin="round"/></svg>
<svg style="position:absolute;left:0;top:0" width="1089" height="603"><line x1="415.9" y1="297.9" x2="436.86" y2="388.76" stroke="#f0fdff" stroke-width="8.7" stroke-linecap="round"/><polygon points="438.2,394.8 425.8,381.6 436.86,388.76 443.9,377.8" fill="#f0fdff" stroke="#f0fdff" stroke-width="8.7" stroke-linejoin="round"/><line x1="415.9" y1="297.9" x2="436.86" y2="388.76" stroke="#ff0000" stroke-width="6.5" stroke-linecap="round"/><polygon points="438.2,394.8 425.8,381.6 436.86,388.76 443.9,377.8" fill="#ff0000" stroke="#ff0000" stroke-width="6.5" stroke-linejoin="round"/></svg>
<svg style="position:absolute;left:0;top:0" width="1089" height="603"><line x1="527.2" y1="289" x2="527.52" y2="376.94" stroke="#f0fdff" stroke-width="8.7" stroke-linecap="round"/><polygon points="527.6,382.9 518,367.8 527.52,376.94 536.8,368.2" fill="#f0fdff" stroke="#f0fdff" stroke-width="8.7" stroke-linejoin="round"/><line x1="527.2" y1="289" x2="527.52" y2="376.94" stroke="#ff0000" stroke-width="6.5" stroke-linecap="round"/><polygon points="527.6,382.9 518,367.8 527.52,376.94 536.8,368.2" fill="#ff0000" stroke="#ff0000" stroke-width="6.5" stroke-linejoin="round"/></svg>
<svg style="position:absolute;left:0;top:0" width="1089" height="603"><line x1="667.9" y1="298.2" x2="656.8" y2="385.7" stroke="#f0fdff" stroke-width="8.7" stroke-linecap="round"/><polygon points="656.3,391.9 648.6,375.9 656.8,385.7 666.5,376.9" fill="#f0fdff" stroke="#f0fdff" stroke-width="8.7" stroke-linejoin="round"/><line x1="667.9" y1="298.2" x2="656.8" y2="385.7" stroke="#ff0000" stroke-width="6.5" stroke-linecap="round"/><polygon points="656.3,391.9 648.6,375.9 656.8,385.7 666.5,376.9" fill="#ff0000" stroke="#ff0000" stroke-width="6.5" stroke-linejoin="round"/></svg>
<svg style="position:absolute;left:0;top:0" width="1089" height="603"><line x1="770.2" y1="312.9" x2="820.06" y2="389.44" stroke="#f0fdff" stroke-width="8.7" stroke-linecap="round"/><polygon points="823.5,394.9 822.9,376.3 820.06,389.44 806.9,386.2" fill="#f0fdff" stroke="#f0fdff" stroke-width="8.7" stroke-linejoin="round"/><line x1="770.2" y1="312.9" x2="820.06" y2="389.44" stroke="#ff0000" stroke-width="6.5" stroke-linecap="round"/><polygon points="823.5,394.9 822.9,376.3 820.06,389.44 806.9,386.2" fill="#ff0000" stroke="#ff0000" stroke-width="6.5" stroke-linejoin="round"/></svg>
</body></html>
